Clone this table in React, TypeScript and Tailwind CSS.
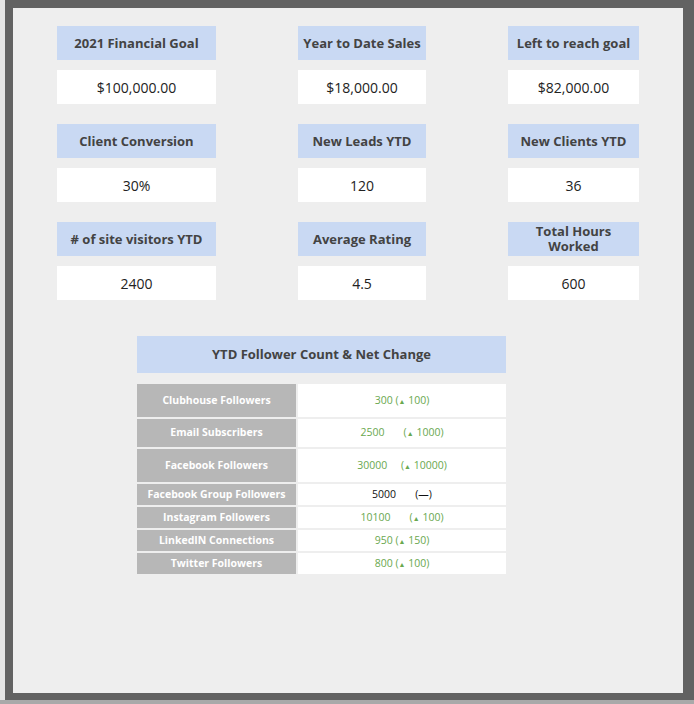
const font = { fontFamily: '"Open Sans", "Liberation Sans", sans-serif' };

type Stat = { label: string; value: string; width: string };

const statRows: Stat[][] = [
  [
    { label: "2021 Financial Goal", value: "$100,000.00", width: "w-[159px]" },
    { label: "Year to Date Sales", value: "$18,000.00", width: "w-[128px]" },
    { label: "Left to reach goal", value: "$82,000.00", width: "w-[131px]" },
  ],
  [
    { label: "Client Conversion", value: "30%", width: "w-[159px]" },
    { label: "New Leads YTD", value: "120", width: "w-[128px]" },
    { label: "New Clients YTD", value: "36", width: "w-[131px]" },
  ],
  [
    { label: "# of site visitors YTD", value: "2400", width: "w-[159px]" },
    { label: "Average Rating", value: "4.5", width: "w-[128px]" },
    { label: "Total Hours\nWorked", value: "600", width: "w-[131px]" },
  ],
];

type Follower = {
  name: string;
  count: string;
  change: string;
  gap: string;
  height: string;
  up: boolean;
};

const followers: Follower[] = [
  { name: "Clubhouse Followers", count: "300", change: "100", gap: " ", height: "h-[33px]", up: true },
  { name: "Email Subscribers", count: "2500", change: "1000", gap: "       ", height: "h-[28px]", up: true },
  { name: "Facebook Followers", count: "30000", change: "10000", gap: "     ", height: "h-[33px]", up: true },
  { name: "Facebook Group Followers", count: "5000", change: "", gap: "       ", height: "h-[21px]", up: false },
  { name: "Instagram Followers", count: "10100", change: "100", gap: "       ", height: "h-[21px]", up: true },
  { name: "LinkedIN Connections", count: "950", change: "150", gap: " ", height: "h-[21px]", up: true },
  { name: "Twitter Followers", count: "800", change: "100", gap: " ", height: "h-[21px]", up: true },
];

function StatCard({ stat }: { stat: Stat }) {
  return (
    <div className={stat.width}>
      <div className="flex h-[34px] items-center justify-center whitespace-pre-line bg-[#c9d9f3] text-center text-[13px] font-bold leading-[15px] text-[#434343]">
        {stat.label}
      </div>
      <div className="mt-[10px] flex h-[34px] items-center justify-center bg-white text-[14px] text-[#222222]">
        {stat.value}
      </div>
    </div>
  );
}

function FollowerRow({ row }: { row: Follower }) {
  return (
    <div className={`flex gap-[2px] ${row.height}`}>
      <div className="flex w-[159px] items-center justify-center whitespace-nowrap bg-[#b7b7b7] text-[10.5px] font-bold text-white">
        {row.name}
      </div>
      <div
        className={`flex flex-1 items-center justify-center whitespace-pre bg-white text-[10.5px] ${
          row.up ? "text-[#6aa84f]" : "text-[#111111]"
        }`}
      >
        {row.count}
        {row.gap}
        {row.up ? (
          <span>
            (<span className="text-[7px]">▲</span> {row.change})
          </span>
        ) : (
          <span>(—)</span>
        )}
      </div>
    </div>
  );
}

export default function App() {
  return (
    <div className="flex h-[704px] w-[694px] flex-col bg-[#a9a9a9]" style={font}>
      <div className="flex h-[700px]">
        <div className="w-[5px] bg-[#e4e4e4]" />
        <div className="flex-1 bg-[#626262] pb-[7px] pl-[8px] pr-[11px] pt-[8px]">
          <div className="h-full bg-[#eeeeee] pl-[44px] pt-[18px]">
            <div className="flex flex-col gap-[20px]">
              {statRows.map((row, i) => (
                <div key={i} className="flex gap-[82px]">
                  {row.map((stat) => (
                    <StatCard key={stat.label} stat={stat} />
                  ))}
                </div>
              ))}
            </div>

            <div className="ml-[80px] mt-[36px] w-[369px]">
              <div className="flex h-[37px] items-center justify-center bg-[#c9d9f3] text-[13px] font-bold text-[#434343]">
                YTD Follower Count &amp; Net Change
              </div>
              <div className="mt-[11px] flex flex-col gap-[2px]">
                {followers.map((row) => (
                  <FollowerRow key={row.name} row={row} />
                ))}
              </div>
            </div>
          </div>
        </div>
      </div>
    </div>
  );
}
